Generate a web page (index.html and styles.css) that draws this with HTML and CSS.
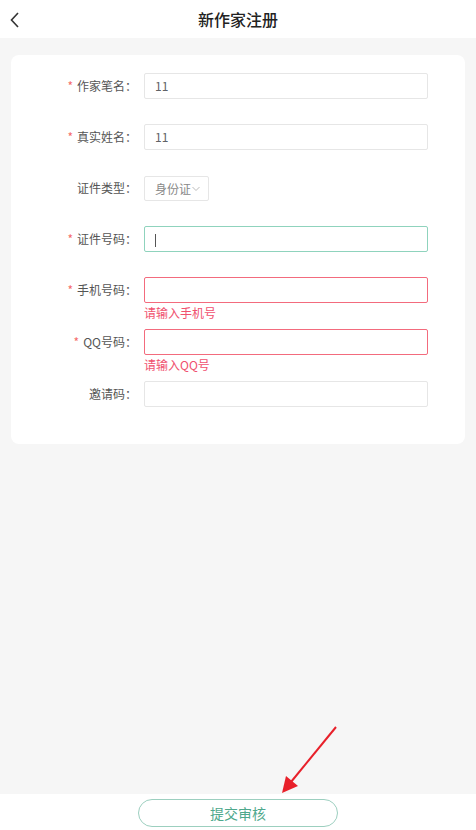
FILE: index.html
```html
<!DOCTYPE html>
<html lang="zh-CN">
<head>
    <meta charset="UTF-8">
    <meta name="viewport" content="width=device-width, initial-scale=1.0">
    <title>新作家注册</title>
    <link rel="stylesheet" href="styles.css">
</head>
<body>
    <div class="page">
        <div class="header">
            <div class="back">
                <svg width="12" height="18" viewBox="0 0 12 18"><path d="M9 2 L2.5 9 L9 16" fill="none" stroke="#333" stroke-width="1.6"/></svg>
            </div>
            <div class="title">新作家注册</div>
        </div>

        <div class="main">
            <div class="card">
                <div class="form-item">
                    <div class="label"><span class="star">*</span>作家笔名：</div>
                    <div class="field"><div class="input">11</div></div>
                </div>
                <div class="form-item">
                    <div class="label"><span class="star">*</span>真实姓名：</div>
                    <div class="field"><div class="input">11</div></div>
                </div>
                <div class="form-item">
                    <div class="label">证件类型：</div>
                    <div class="field">
                        <div class="select">身份证
                            <svg width="8" height="6" viewBox="0 0 8 6"><path d="M0.5 1 L4 4.5 L7.5 1" fill="none" stroke="#bbb" stroke-width="1"/></svg>
                        </div>
                    </div>
                </div>
                <div class="form-item">
                    <div class="label"><span class="star">*</span>证件号码：</div>
                    <div class="field"><div class="input focus"><span class="caret"></span></div></div>
                </div>
                <div class="form-item has-error">
                    <div class="label"><span class="star">*</span>手机号码：</div>
                    <div class="field">
                        <div class="input error"></div>
                        <div class="error-msg">请输入手机号</div>
                    </div>
                </div>
                <div class="form-item has-error">
                    <div class="label"><span class="star">*</span>QQ号码：</div>
                    <div class="field">
                        <div class="input error"></div>
                        <div class="error-msg">请输入QQ号</div>
                    </div>
                </div>
                <div class="form-item last">
                    <div class="label">邀请码：</div>
                    <div class="field"><div class="input"></div></div>
                </div>
            </div>
        </div>

        <div class="footer">
            <div class="submit">提交审核</div>
        </div>

        <svg class="arrow" width="476" height="830" viewBox="0 0 476 830">
            <line x1="336" y1="727" x2="291" y2="782" stroke="#e8202a" stroke-width="2"/>
            <polygon points="282,793 286,776 298,786" fill="#e8202a"/>
        </svg>
    </div>
</body>
</html>
```

FILE: styles.css
```css
body {
    margin: 0;
    background: #f6f6f6;
    font-family: "Noto Sans CJK SC", "Noto Sans", sans-serif;
    color: #606266;
}
.page {
    position: relative;
    display: flex;
    flex-direction: column;
    height: 100vh;
}
.header {
    position: relative;
    display: flex;
    justify-content: center;
    align-items: center;
    height: 38px;
    background: #fff;
}
.back {
    position: absolute;
    left: 9px;
    top: 10px;
}
.title {
    font-size: 16px;
    font-weight: 500;
    color: #222;
}
.main {
    flex: 1;
    padding: 17px 11px 0;
}
.card {
    background: #fff;
    border-radius: 8px;
    padding: 18px 37px 37px 0;
}
.form-item {
    display: flex;
    margin-bottom: 25px;
}
.form-item.has-error {
    margin-bottom: 8px;
}
.form-item.last {
    margin-bottom: 0;
}
.label {
    width: 126px;
    padding-right: 7px;
    height: 26px;
    line-height: 26px;
    text-align: right;
    font-size: 12px;
    color: #555;
}
.star {
    color: #f56c6c;
    margin-right: 4px;
}
.field {
    flex: 1;
}
.input {
    box-sizing: border-box;
    height: 26px;
    line-height: 24px;
    padding-left: 10px;
    border: 1px solid #e6e6e6;
    border-radius: 2px;
    font-size: 12px;
    color: #606266;
}
.input.focus {
    border-color: #8fd3bd;
}
.input.error {
    border-color: #f36b7d;
}
.caret {
    display: inline-block;
    width: 1px;
    height: 13px;
    background: #555;
    vertical-align: middle;
}
.error-msg {
    height: 18px;
    line-height: 20px;
    font-size: 12px;
    color: #f0506e;
}
.select {
    display: inline-flex;
    align-items: center;
    gap: 1px;
    box-sizing: border-box;
    height: 25px;
    padding: 0 8px 0 10px;
    border: 1px solid #e6e6e6;
    border-radius: 2px;
    font-size: 12px;
    color: #888;
}
.footer {
    display: flex;
    justify-content: center;
    padding: 5px 0 3px;
    background: #fff;
}
.submit {
    box-sizing: border-box;
    width: 200px;
    height: 28px;
    line-height: 26px;
    text-align: center;
    border: 1px solid #9ccfbf;
    border-radius: 14px;
    font-size: 14px;
    color: #4ea88c;
}
.arrow {
    position: absolute;
    left: 0;
    top: 0;
    pointer-events: none;
}
```
